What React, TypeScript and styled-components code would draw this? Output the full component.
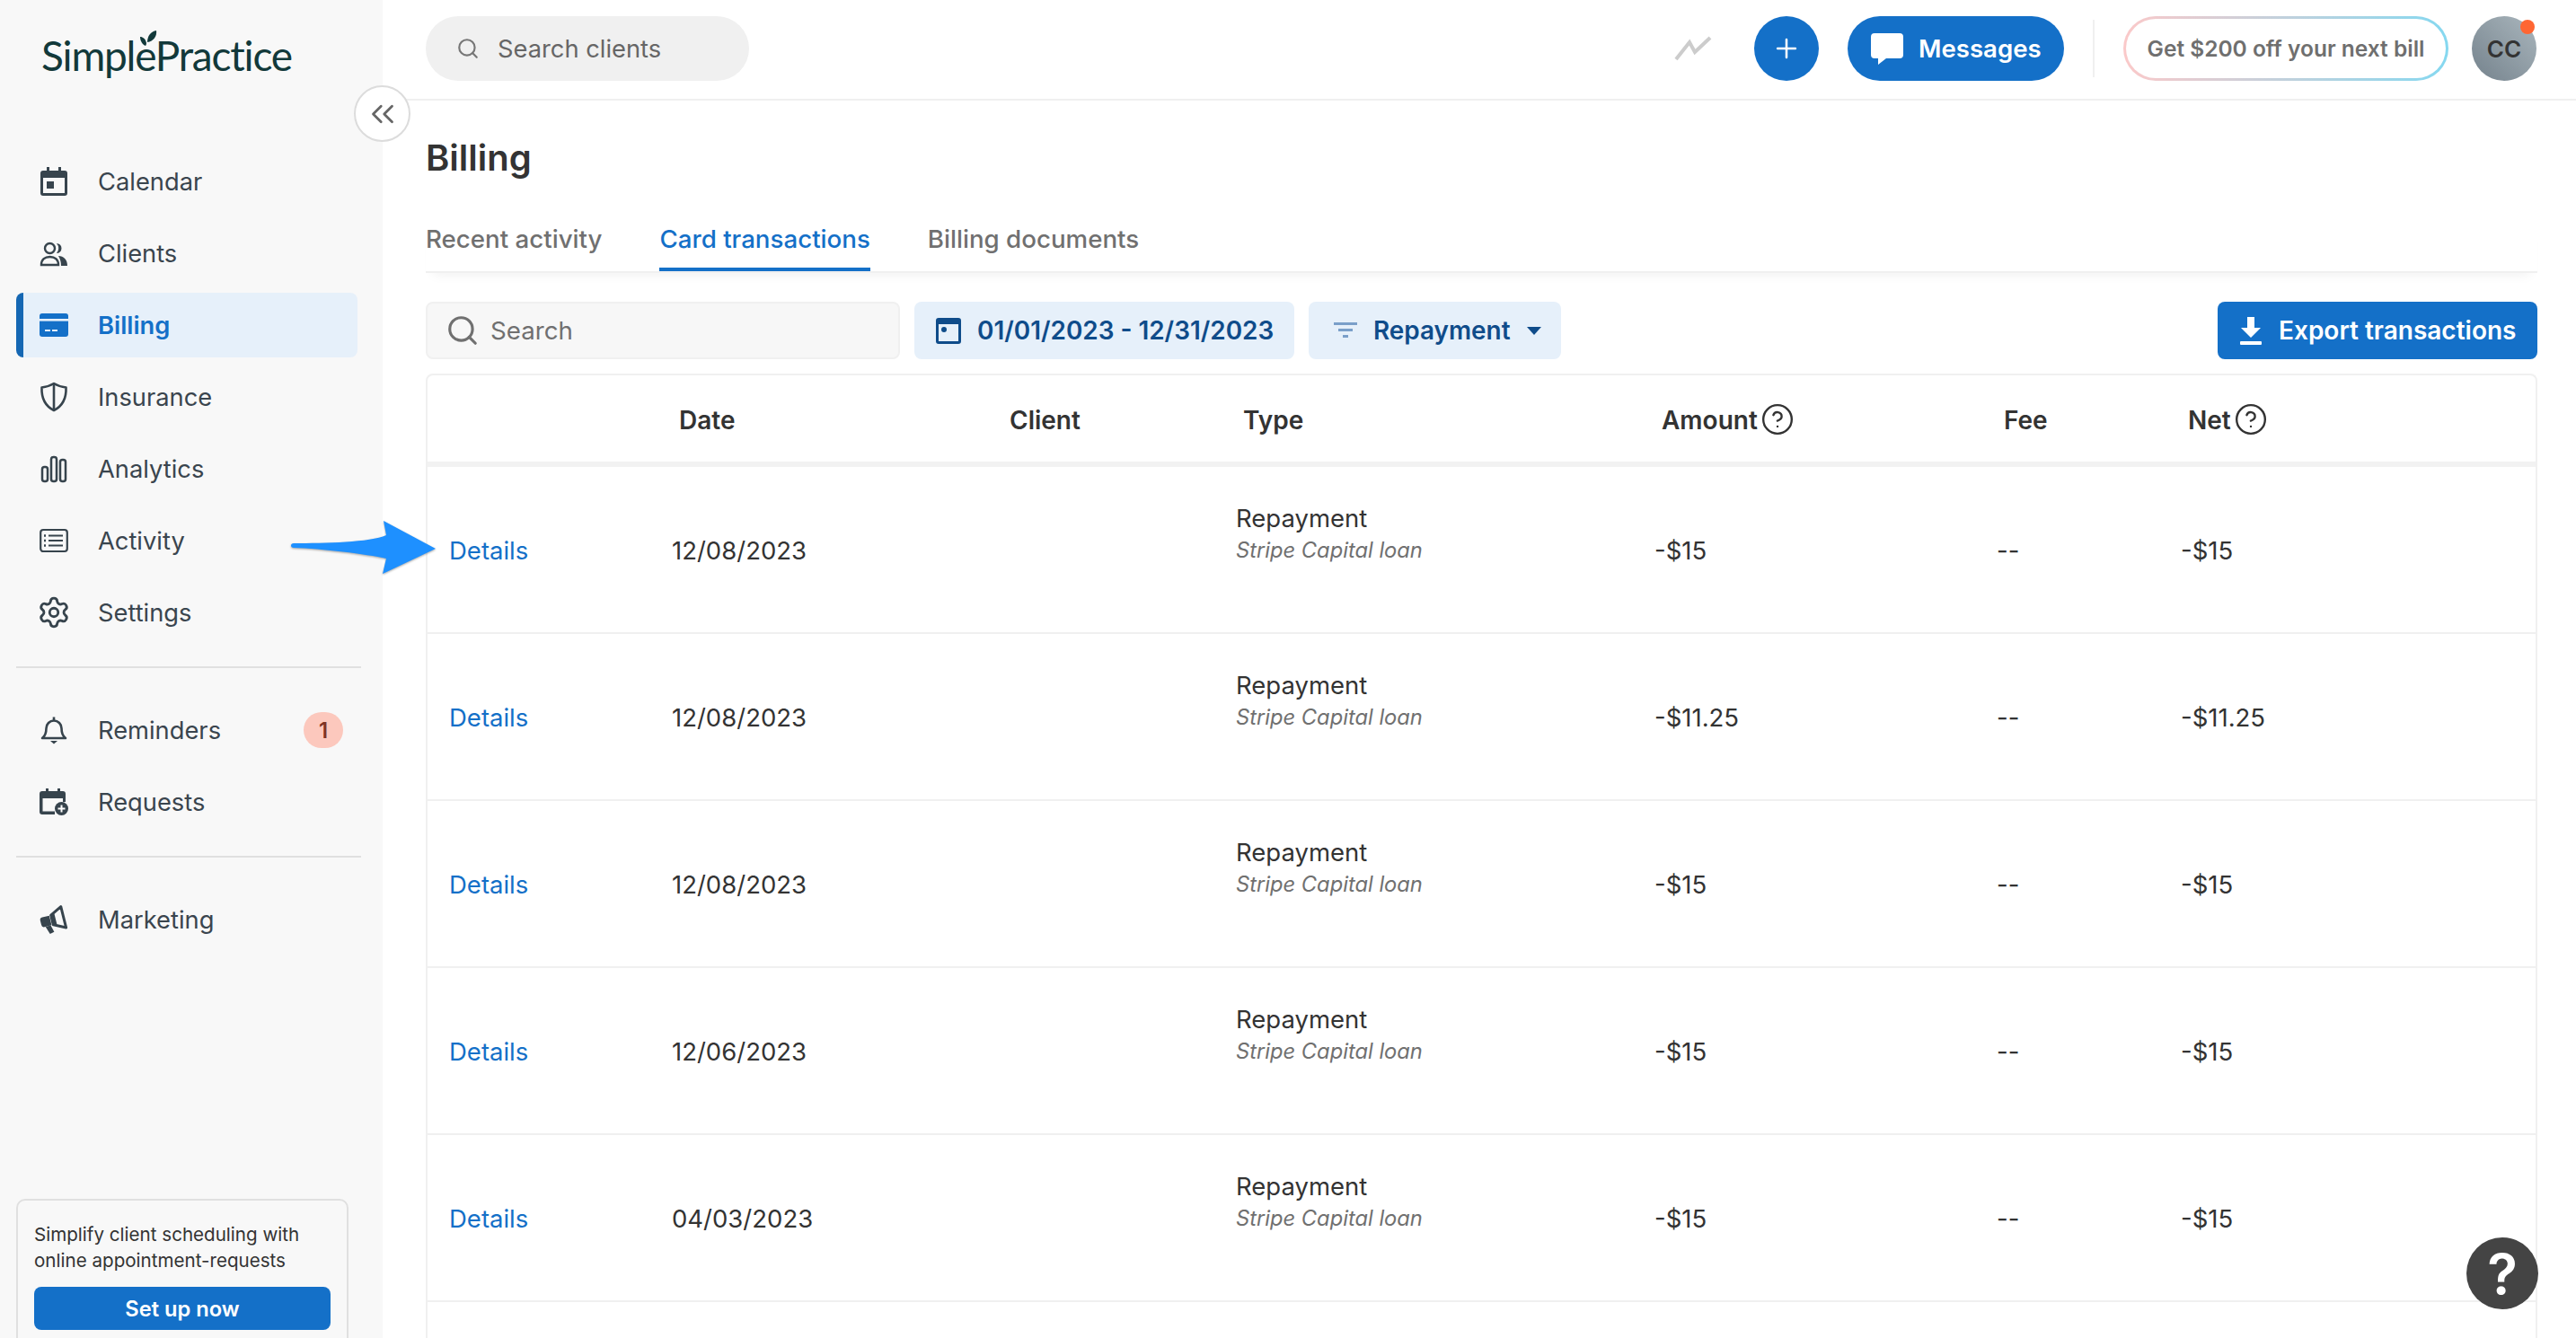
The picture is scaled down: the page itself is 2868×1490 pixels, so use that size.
import React from "react";
import styled, { createGlobalStyle } from "styled-components";
import { Search, Settings, ChevronsLeft, Plus, CircleHelp } from "lucide-react";

const Global = createGlobalStyle`
  html, body { margin: 0; padding: 0; background: #fff; }
  body { font-family: Inter, "Noto Sans", sans-serif; }
  * { box-sizing: border-box; }
`;

const Shell = styled.div`
  position: relative;
  display: flex;
  width: 2868px;
  height: 1490px;
  overflow: hidden;
  background: #fff;
  color: #333;
`;

const Sidebar = styled.aside`
  width: 426px;
  flex: none;
  display: flex;
  flex-direction: column;
  padding: 0 18px;
  background: #f8f8f8;
`;

const Logo = styled.div`
  position: relative;
  height: 166px;
  padding: 33px 0 0 28px;
  font-family: Lato, "Open Sans", sans-serif;
  font-size: 46px;
  line-height: 58px;
  letter-spacing: -1.2px;
  color: #12393a;
`;

const Leaf = styled.svg`
  position: absolute;
  left: 137px;
  top: 33px;
  width: 20px;
  height: 20px;
`;

const NavList = styled.nav`
  display: flex;
  flex-direction: column;
  gap: 8px;
`;

const NavItem = styled.a<{ $active?: boolean }>`
  display: flex;
  align-items: center;
  width: 380px;
  height: 72px;
  padding-left: 18px;
  padding-right: 16px;
  border-left: 8px solid ${(p) => (p.$active ? "#1567b3" : "transparent")};
  border-radius: 8px;
  background: ${(p) => (p.$active ? "#e6f0fa" : "transparent")};
  color: ${(p) => (p.$active ? "#1470c8" : "#3a454e")};
  font-size: 27.3px;
  font-weight: ${(p) => (p.$active ? 600 : 400)};
`;

const NavIcon = styled.span`
  display: flex;
  align-items: center;
  justify-content: center;
  width: 32px;
  height: 32px;
  margin-right: 33px;
  flex: none;
  svg { display: block; flex: none; }
`;

const NavLabel = styled.span`
  flex: 1;
`;

const Badge = styled.span`
  display: flex;
  align-items: center;
  justify-content: center;
  width: 44px;
  height: 40px;
  border-radius: 20px;
  background: #fcc8bd;
  color: #7f3325;
  font-size: 24px;
  font-weight: 600;
`;

const Rule = styled.hr`
  width: 384px;
  height: 2px;
  margin: 24px 0 33px;
  border: 0;
  background: #e0e0e0;
`;

const Promo = styled.div`
  width: 370px;
  margin-top: auto;
  margin-bottom: -11px;
  padding: 23px 18px 18px;
  border: 2px solid #e0e0e0;
  border-radius: 10px;
  font-size: 20.6px;
  line-height: 29px;
  color: #333;
`;

const PromoButton = styled.button`
  display: block;
  width: 100%;
  height: 48px;
  margin-top: 15px;
  border: 0;
  border-radius: 8px;
  background: #1470c8;
  color: #fff;
  font-family: inherit;
  font-size: 23.7px;
  font-weight: 600;
`;

const Main = styled.main`
  flex: 1;
  min-width: 0;
  display: flex;
  flex-direction: column;
`;

const TopBar = styled.header`
  display: flex;
  align-items: center;
  height: 112px;
  flex: none;
  padding: 0 44px 2px 48px;
  border-bottom: 2px solid #f0f0f0;
`;

const ClientSearch = styled.div`
  display: flex;
  align-items: center;
  width: 360px;
  height: 72px;
  padding-left: 34px;
  gap: 20px;
  border-radius: 36px;
  background: #f0f0f0;
  color: #666;
  font-size: 27.3px;
`;

const TopRight = styled.div`
  margin-left: auto;
  display: flex;
  align-items: center;
`;

const Trend = styled.svg`
  width: 42px;
  height: 28px;
  margin-right: 47px;
`;

const RoundAdd = styled.button`
  display: flex;
  align-items: center;
  justify-content: center;
  width: 72px;
  height: 72px;
  margin-right: 32px;
  padding: 0;
  border: 0;
  border-radius: 50%;
  background: #1470c8;
  color: #fff;
`;

const Messages = styled.button`
  display: flex;
  align-items: center;
  gap: 17px;
  width: 241px;
  height: 72px;
  padding: 0 0 0 26px;
  border: 0;
  border-radius: 36px;
  background: #1470c8;
  color: #fff;
  font-family: inherit;
  font-size: 27.6px;
  font-weight: 600;
`;

const VDivider = styled.span`
  width: 2px;
  height: 64px;
  margin: 0 32px 0 32px;
  background: #f0f0f0;
`;

const Offer = styled.div`
  display: flex;
  align-items: center;
  justify-content: center;
  width: 362px;
  height: 72px;
  margin-right: 26px;
  border: 3px solid transparent;
  border-radius: 36px;
  background: linear-gradient(#fff, #fff) padding-box,
    linear-gradient(90deg, #fbc9c9, #85d8f0) border-box;
  color: #6f6f6f;
  font-size: 24.5px;
  font-weight: 600;
`;

const Avatar = styled.div`
  position: relative;
  display: flex;
  align-items: center;
  justify-content: center;
  width: 72px;
  height: 72px;
  border-radius: 50%;
  background: linear-gradient(45deg, #74828c, #aab6bd);
  color: #333;
  font-size: 26px;
  font-weight: 600;
`;

const AvatarDot = styled.span`
  position: absolute;
  right: 2px;
  top: 4px;
  width: 16px;
  height: 16px;
  border-radius: 50%;
  background: #ff6633;
`;

const Content = styled.section`
  flex: 1;
  min-height: 0;
  padding: 40px 43px 0 48px;
  overflow: hidden;
`;

const Title = styled.h1`
  margin: 0;
  font-size: 40px;
  line-height: 48px;
  font-weight: 600;
  color: #333;
`;

const Tabs = styled.div`
  display: flex;
  gap: 64px;
  margin-top: 48px;
  border-bottom: 2px solid #f0f0f0;
  box-shadow: 0 10px 12px -8px rgba(0, 0, 0, 0.06);
`;

const Tab = styled.a<{ $active?: boolean }>`
  display: block;
  height: 54px;
  line-height: 36px;
  border-bottom: 4px solid ${(p) => (p.$active ? "#1470c8" : "transparent")};
  color: ${(p) => (p.$active ? "#1470c8" : "#707070")};
  font-size: 27.7px;
  font-weight: 500;
`;

const Toolbar = styled.div`
  display: flex;
  align-items: stretch;
  height: 64px;
  margin-top: 32px;
`;

const SearchBox = styled.div`
  display: flex;
  align-items: center;
  width: 528px;
  padding-left: 20px;
  gap: 12px;
  border: 2px solid #f0f0f0;
  border-radius: 8px;
  background: #f7f7f7;
  color: #707070;
  font-size: 27.7px;
`;

const FilterPill = styled.div<{ $width: number; $gap: number; $pad: number }>`
  display: flex;
  align-items: center;
  width: ${(p) => p.$width}px;
  margin-left: 16px;
  padding-left: ${(p) => p.$pad}px;
  gap: ${(p) => p.$gap}px;
  border-radius: 8px;
  background: #e6f0fa;
  color: #0f4c8a;
  font-size: 27.9px;
  font-weight: 600;
`;

const ExportButton = styled.button`
  display: flex;
  align-items: center;
  gap: 19px;
  width: 356px;
  margin-left: auto;
  padding: 0 0 0 25px;
  border: 0;
  border-radius: 8px;
  background: #1470c8;
  color: #fff;
  font-family: inherit;
  font-size: 28px;
  font-weight: 600;
`;

const Table = styled.div`
  margin-top: 16px;
  border: 2px solid #f0f0f0;
  border-bottom: 0;
  border-radius: 8px 8px 0 0;
  height: 1100px;
`;

const columns = "272px 368px 260px 466px 381px 205px 1fr";

const HeadRow = styled.div`
  display: grid;
  grid-template-columns: ${columns};
  align-items: center;
  height: 102px;
  padding-top: 3px;
  border-bottom: 6px solid #f2f2f2;
`;

const HeadCell = styled.div`
  display: flex;
  align-items: center;
  gap: 3px;
  padding-left: 8px;
  color: #333;
  font-size: 28px;
  font-weight: 600;
  svg { margin-top: -2px; }
`;

const Row = styled.div`
  display: grid;
  grid-template-columns: ${columns};
  align-items: center;
  height: 186px;
  padding-top: 1px;
  border-bottom: 2px solid #f0f0f0;
  color: #333;
  font-size: 27.5px;
`;

const DetailsLink = styled.a`
  padding-left: 24px;
  color: #1470c8;
`;

const TypeCell = styled.div`
  align-self: start;
  padding-top: 38px;
  line-height: 36px;
`;

const TypeNote = styled.div`
  font-size: 23.7px;
  font-style: italic;
  color: #707070;
`;

const HelpBubble = styled.button`
  position: absolute;
  left: 2746px;
  top: 1378px;
  display: flex;
  align-items: center;
  justify-content: center;
  width: 80px;
  height: 80px;
  padding: 0;
  border: 0;
  border-radius: 50%;
  background: #444;
  color: #fff;
  font-family: inherit;
  font-size: 62px;
  font-weight: 600;
`;

const CollapseButton = styled.button`
  position: absolute;
  left: 394px;
  top: 95px;
  display: flex;
  align-items: center;
  justify-content: center;
  width: 63px;
  height: 63px;
  padding: 0;
  border: 2.5px solid #dcdcdc;
  border-radius: 50%;
  background: #fff;
  color: #666;
`;

const Arrow = styled.svg`
  position: absolute;
  left: 318px;
  top: 574px;
  width: 175px;
  height: 72px;
  overflow: visible;
  filter: drop-shadow(0 1px 1px rgba(0, 0, 0, 0.35));
`;

const ink = "#37444d";

const IconCalendar = () => (
  <svg width="32" height="34" viewBox="0 0 32 34" fill={ink}>
    <path fillRule="evenodd" d="M8 1h3v4h10V1h3v4h4a3 3 0 0 1 3 3v22a3 3 0 0 1-3 3H4a3 3 0 0 1-3-3V8a3 3 0 0 1 3-3h4zM4 13v17h24V13z" />
    <rect x="8" y="17" width="8" height="8" />
  </svg>
);
const IconClients = () => (
  <svg width="32" height="32" viewBox="0 0 32 32" fill="none" stroke={ink} strokeWidth="2.4">
    <circle cx="11.5" cy="10.5" r="5.5" />
    <path d="M19 5a5.5 5.5 0 0 1 0 11 8 8 0 0 0 0-11z" fill={ink} stroke="none" />
    <path d="M2 29c0-6 4-9 9.5-9s9.5 3 9.5 9z" />
    <path d="M21 19c6 0 10 4 10 11h-7c0-4-1-8-3-11z" fill={ink} stroke="none" />
  </svg>
);
const IconCard = () => (
  <svg width="32" height="32" viewBox="0 0 32 32">
    <path fill="#1470c8" d="M3 3h26a3 3 0 0 1 3 3v20a3 3 0 0 1-3 3H3a3 3 0 0 1-3-3V6a3 3 0 0 1 3-3z" />
    <rect y="9" width="32" height="2.6" fill="#e6f0fa" />
    <rect x="6" y="21" width="6" height="2" fill="#e6f0fa" />
    <rect x="14" y="21" width="6" height="2" fill="#e6f0fa" />
  </svg>
);
const IconShield = () => (
  <svg width="32" height="34" viewBox="0 0 32 34" fill="none" stroke={ink} strokeWidth="2.6" strokeLinejoin="round">
    <path d="M16 2c4 2.500 9 4 13.500 4.500C30 19 25 27.500 16 32 7 27.500 2 19 2.500 6.500 7 6 12 4.500 16 2z" />
    <path d="M16 2v30" />
  </svg>
);
const IconBars = () => (
  <svg width="32" height="32" viewBox="0 0 32 32" fill="none" stroke={ink} strokeWidth="2.5">
    <rect x="3" y="14" width="6" height="16" rx="2.500" />
    <rect x="13" y="3" width="6" height="27" rx="2.500" />
    <rect x="23" y="6" width="6" height="24" rx="2.500" />
  </svg>
);
const IconList = () => (
  <svg width="32" height="28" viewBox="0 0 32 28" fill="none" stroke={ink} strokeWidth="2.2">
    <rect x="1.200" y="2" width="29.600" height="24" rx="3" />
    <path d="M10 8.500h16M10 14h16M10 19.500h16" />
    <path d="M5 8.500h2M5 14h2M5 19.500h2" strokeWidth="2.600" />
  </svg>
);
const IconBell = () => (
  <svg width="32" height="34" viewBox="0 0 32 34" fill="none" stroke={ink} strokeWidth="2.6" strokeLinejoin="round">
    <path d="M3 26c3.500-2.500 4.500-6 4.500-11a8.500 8.500 0 0 1 17 0c0 5 1 8.500 4.500 11z" />
    <path d="M16 2.500v4" />
    <path d="M12 29h8l-4 3.500z" fill={ink} stroke="none" />
  </svg>
);
const IconRequests = () => (
  <svg width="32" height="30" viewBox="0 0 32 30" fill={ink}>
    <path fillRule="evenodd" d="M7 0h3v3h10V0h3v3h3a3 3 0 0 1 3 3v9h-3v-4H3.500v14.500H17V29H3a3 3 0 0 1-3-3V6a3 3 0 0 1 3-3h4z" />
    <circle cx="24.500" cy="22.500" r="7.500" />
    <path d="M24.500 18.500v8M20.500 22.500h8" stroke="#fff" strokeWidth="2" />
  </svg>
);
const IconMegaphone = () => (
  <svg width="32" height="32" viewBox="0 0 32 32" fill={ink}>
    <g transform="rotate(-14 16 16)">
      <path d="M1 13.500a3 3 0 0 1 3-3h8v11H4a3 3 0 0 1-3-3z" />
      <path d="M14 10.500 27 4v24l-13-6.500z" fill="none" stroke={ink} strokeWidth="3" strokeLinejoin="round" />
      <path d="M5 21.500h6l2 8-5 1z" />
      <rect x="13" y="10" width="5" height="12" />
    </g>
  </svg>
);

const IconDate = () => (
  <svg width="28" height="29" viewBox="0 0 28 29" fill="#0f4c8a">
    <path fillRule="evenodd" d="M3 0h22a3 3 0 0 1 3 3v23a3 3 0 0 1-3 3H3a3 3 0 0 1-3-3V3a3 3 0 0 1 3-3zm0 7v19h22V7z" />
    <circle cx="9" cy="13" r="3" />
  </svg>
);
const IconFilter = () => (
  <svg width="26" height="18" viewBox="0 0 26 18" fill="#7a9fc9">
    <rect width="26" height="3" />
    <rect x="5" y="7" width="16" height="3" />
    <rect x="10" y="14" width="6" height="3" />
  </svg>
);
const IconCaret = () => (
  <svg width="16" height="9" viewBox="0 0 16 9" fill="#0f4c8a">
    <path d="M0 0h16L8 9z" />
  </svg>
);
const IconDownload = () => (
  <svg width="24" height="31" viewBox="0 0 24 31" fill="#fff">
    <path d="M8 0h8v12h7L12 23 1 12h7z" />
    <rect y="27" width="24" height="4" rx="1" />
  </svg>
);
const IconChat = () => (
  <svg width="36" height="35" viewBox="0 0 36 35" fill="#fff">
    <path d="M4 0h28a4 4 0 0 1 4 4v20a4 4 0 0 1-4 4H17l-9 7v-7H4a4 4 0 0 1-4-4V4a4 4 0 0 1 4-4z" />
  </svg>
);

const rows = ["12/08/2023", "12/08/2023", "12/08/2023", "12/06/2023", "04/03/2023"];
const amounts = ["-$15", "-$11.25", "-$15", "-$15", "-$15"];

export default function App() {
  return (
    <Shell>
      <Global />
      <Sidebar>
        <Logo>
          SimplePractice
          <Leaf viewBox="0 0 20 20" fill="#12393a">
            <path d="M9 14C9 7 13 2 19 1c1 6-3 12-10 13z" />
            <path d="M1 8c3 0 6 2 7 7 0 2-1 3-1 3C4 17 1 13 1 8z" />
          </Leaf>
        </Logo>
        <NavList>
          <NavItem><NavIcon><IconCalendar /></NavIcon><NavLabel>Calendar</NavLabel></NavItem>
          <NavItem><NavIcon><IconClients /></NavIcon><NavLabel>Clients</NavLabel></NavItem>
          <NavItem $active><NavIcon><IconCard /></NavIcon><NavLabel>Billing</NavLabel></NavItem>
          <NavItem><NavIcon><IconShield /></NavIcon><NavLabel>Insurance</NavLabel></NavItem>
          <NavItem><NavIcon><IconBars /></NavIcon><NavLabel>Analytics</NavLabel></NavItem>
          <NavItem><NavIcon><IconList /></NavIcon><NavLabel>Activity</NavLabel></NavItem>
          <NavItem><NavIcon><Settings size={38} color={ink} strokeWidth={1.8} /></NavIcon><NavLabel>Settings</NavLabel></NavItem>
        </NavList>
        <Rule />
        <NavList>
          <NavItem><NavIcon><IconBell /></NavIcon><NavLabel>Reminders</NavLabel><Badge>1</Badge></NavItem>
          <NavItem><NavIcon><IconRequests /></NavIcon><NavLabel>Requests</NavLabel></NavItem>
        </NavList>
        <Rule />
        <NavList>
          <NavItem><NavIcon><IconMegaphone /></NavIcon><NavLabel>Marketing</NavLabel></NavItem>
        </NavList>
        <Promo>
          Simplify client scheduling with
          <br />
          online appointment-requests
          <PromoButton>Set up now</PromoButton>
        </Promo>
      </Sidebar>
      <Main>
        <TopBar>
          <ClientSearch>
            <Search size={26} color="#777" strokeWidth={2} />
            Search clients
          </ClientSearch>
          <TopRight>
            <Trend viewBox="0 0 42 28" fill="none" stroke="#cccccc" strokeWidth="4">
              <path d="M2 26 17 7l6 11L40 2" />
            </Trend>
            <RoundAdd><Plus size={34} strokeWidth={1.8} /></RoundAdd>
            <Messages><IconChat />Messages</Messages>
            <VDivider />
            <Offer>Get $200 off your next bill</Offer>
            <Avatar>CC<AvatarDot /></Avatar>
          </TopRight>
        </TopBar>
        <Content>
          <Title>Billing</Title>
          <Tabs>
            <Tab>Recent activity</Tab>
            <Tab $active>Card transactions</Tab>
            <Tab>Billing documents</Tab>
          </Tabs>
          <Toolbar>
            <SearchBox>
              <Search size={38} color="#707070" strokeWidth={2} />
              Search
            </SearchBox>
            <FilterPill $width={423} $gap={18} $pad={24}>
              <IconDate />
              01/01/2023 - 12/31/2023
            </FilterPill>
            <FilterPill $width={281} $gap={18} $pad={28}>
              <IconFilter />
              Repayment
              <IconCaret />
            </FilterPill>
            <ExportButton><IconDownload />Export transactions</ExportButton>
          </Toolbar>
          <Table>
            <HeadRow>
              <div />
              <HeadCell>Date</HeadCell>
              <HeadCell>Client</HeadCell>
              <HeadCell>Type</HeadCell>
              <HeadCell>Amount<CircleHelp size={38} strokeWidth={1.5} /></HeadCell>
              <HeadCell>Fee</HeadCell>
              <HeadCell>Net<CircleHelp size={38} strokeWidth={1.5} /></HeadCell>
            </HeadRow>
            {rows.map((date, i) => (
              <Row key={i}>
                <DetailsLink>Details</DetailsLink>
                <div>{date}</div>
                <div />
                <TypeCell>
                  Repayment
                  <TypeNote>Stripe Capital loan</TypeNote>
                </TypeCell>
                <div>{amounts[i]}</div>
                <div>--</div>
                <div>{amounts[i]}</div>
              </Row>
            ))}
          </Table>
        </Content>
      </Main>
      <CollapseButton><ChevronsLeft size={42} strokeWidth={1.6} /></CollapseButton>
      <Arrow viewBox="0 0 175 72">
        <path
          fill="#1e90ff"
          d="M9 31c35 0 85-1 103-9L109 6l58 31-59 28 4-17C90 43 40 37 9 36c-4 0-4-5 0-5z"
        />
      </Arrow>
      <HelpBubble>?</HelpBubble>
    </Shell>
  );
}
